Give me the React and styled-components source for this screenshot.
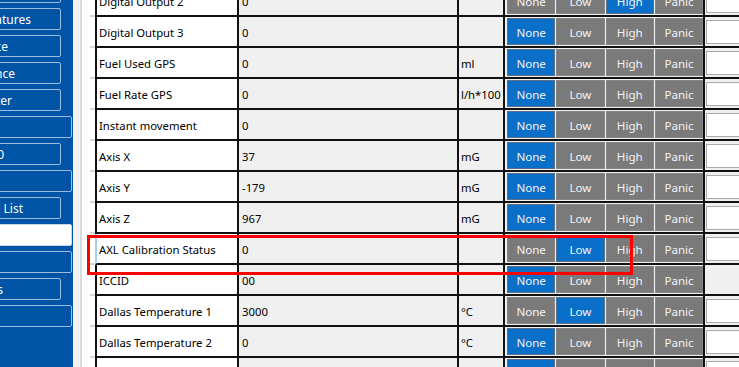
import React from 'react';
import styled, { createGlobalStyle } from 'styled-components';

const Global = createGlobalStyle`
  html, body { margin: 0; padding: 0; background: #ffffff; }
  body { font-family: "Noto Sans", "Open Sans", sans-serif; overflow: hidden; }
  * { box-sizing: border-box; }
`;

const Page = styled.div`
  position: relative;
  display: flex;
  width: 739px;
  height: 367px;
  overflow: hidden;
  background: #ffffff;
`;

const Sidebar = styled.nav`
  flex: 0 0 73px;
  width: 73px;
  background: #0054a6;
  overflow: hidden;
`;

const SideList = styled.div`
  display: flex;
  flex-direction: column;
  gap: 5px;
  width: 71px;
  margin: -19px 0 0 -10px;
`;

const SideButton = styled.div`
  width: 71px;
  height: 22px;
  flex: 0 0 22px;
  display: flex;
  align-items: center;
  justify-content: flex-end;
  overflow: hidden;
  padding-right: ${p => p.$trail}px;
  border: 1px solid ${p => (p.$active ? '#c3d9ef' : '#9dbde0')};
  border-radius: 2px;
  background: ${p => (p.$active ? '#ffffff' : 'transparent')};
  color: #ffffff;
  font-size: 12px;
  white-space: nowrap;
`;

const Gutter = styled.div`
  flex: 0 0 9px;
  background: #f3f3f3;
  border-right: 2px solid #dadada;
`;

const TableArea = styled.div`
  flex: 1;
  overflow: hidden;
`;

const Table = styled.div`
  margin-top: -14px;
`;

const Row = styled.div`
  display: grid;
  grid-template-columns: 13px 142px 220px 46px 200px 80px;
  height: 31px;
`;

const Lead = styled.div`
  display: flex;
  align-items: flex-end;
  justify-content: flex-end;
  background: #ffffff;
`;

const Tick = styled.div`
  width: 5px;
  height: 2px;
  background: #d6d6d6;
`;

const Cell = styled.div`
  display: flex;
  align-items: center;
  border-left: 2px solid ${p => (p.$focus ? '#a9cdee' : '#111111')};
  border-bottom: 2px solid #111111;
  padding: 2px 0 0 ${p => p.$pad ?? 3}px;
  background: ${p => (p.$light ? '#ffffff' : '#f0f0f0')};
  color: #000000;
  font-size: 11.3px;
  white-space: nowrap;
  overflow: hidden;
`;

const LevelCell = styled.div`
  display: flex;
  align-items: flex-start;
  gap: 1px;
  padding: 1px 0 0 2px;
  border-left: 2px solid #111111;
  border-bottom: 2px solid #111111;
  background: #eeeeee;
`;

const LevelButton = styled.div`
  flex: 0 0 48.3px;
  height: 27px;
  display: flex;
  align-items: center;
  justify-content: center;
  padding-top: 1px;
  background: ${p => (p.$on ? '#0a6fc9' : '#7a7a7a')};
  border: 1px solid ${p => (p.$on ? '#5d7086' : '#858585')};
  color: #f4f4f4;
  font-size: 11.6px;
`;

const InputCell = styled.div`
  padding: 3px 0 0 1px;
  border-left: 2px solid #111111;
  border-bottom: 2px solid #111111;
  background: #f0f0f0;
`;

const Field = styled.div`
  width: 100px;
  height: 24px;
  background: #ffffff;
  border: 1px solid #a9a9a9;
`;

const Highlight = styled.div`
  position: absolute;
  left: 87px;
  top: 235px;
  width: 546px;
  height: 40px;
  border: 3px solid #ff0000;
  pointer-events: none;
`;

const sideItems = [
  { label: 'Features', trail: 29 },
  { label: 'Accelerometer Features', trail: 29 },
  { label: 'Auto Geofence', trail: 52 },
  { label: 'Manual Geofence', trail: 45 },
  { label: 'Trip \\ Odometer', trail: 48 },
  { label: 'Bluetooth', trail: 80 },
  { label: 'Bluetooth 4.0', trail: 56 },
  { label: 'Beacon List', trail: 80 },
  { label: 'iButton ID List', trail: 37 },
  { label: 'I/O', trail: 80, active: true },
  { label: 'CAN adapter', trail: 80 },
  { label: 'User Scenarios', trail: 57 },
  { label: 'Tachograph', trail: 80 },
];

const levels = ['None', 'Low', 'High', 'Panic'];

const rows = [
  { name: 'Digital Output 2', value: '0', unit: '', level: 'High' },
  { name: 'Digital Output 3', value: '0', unit: '', level: 'None' },
  { name: 'Fuel Used GPS', value: '0', unit: 'ml', level: 'None' },
  { name: 'Fuel Rate GPS', value: '0', unit: 'l/h*100', level: 'None' },
  { name: 'Instant movement', value: '0', unit: '', level: 'None' },
  { name: 'Axis X', value: '37', unit: 'mG', level: 'None' },
  { name: 'Axis Y', value: '-179', unit: 'mG', level: 'None' },
  { name: 'Axis Z', value: '967', unit: 'mG', level: 'None' },
  { name: 'AXL Calibration Status', value: '0', unit: '', level: 'Low', focus: true },
  { name: 'ICCID', value: '00', unit: '', level: 'None', noField: true },
  { name: 'Dallas Temperature 1', value: '3000', unit: '°C', level: 'Low' },
  { name: 'Dallas Temperature 2', value: '0', unit: '°C', level: 'None' },
  { name: 'Dallas Temperature 3', value: '0', unit: '°C', level: 'None' },
];

export default function App() {
  return (
    <Page>
      <Global />
      <Sidebar>
        <SideList>
          {sideItems.map((it, i) => (
            <SideButton key={i} $trail={it.trail} $active={it.active}>
              {it.label}
            </SideButton>
          ))}
        </SideList>
      </Sidebar>
      <Gutter />
      <TableArea>
        <Table>
          {rows.map((r, i) => (
            <Row key={i}>
              <Lead>
                <Tick />
              </Lead>
              <Cell $light $pad={2} $focus={r.focus}>{r.name}</Cell>
              <Cell $pad={3}>{r.value}</Cell>
              <Cell $pad={2}>{r.unit}</Cell>
              <LevelCell>
                {levels.map(l => (
                  <LevelButton key={l} $on={l === r.level}>{l}</LevelButton>
                ))}
              </LevelCell>
              <InputCell>{!r.noField && <Field />}</InputCell>
            </Row>
          ))}
        </Table>
      </TableArea>
      <Highlight />
    </Page>
  );
}
